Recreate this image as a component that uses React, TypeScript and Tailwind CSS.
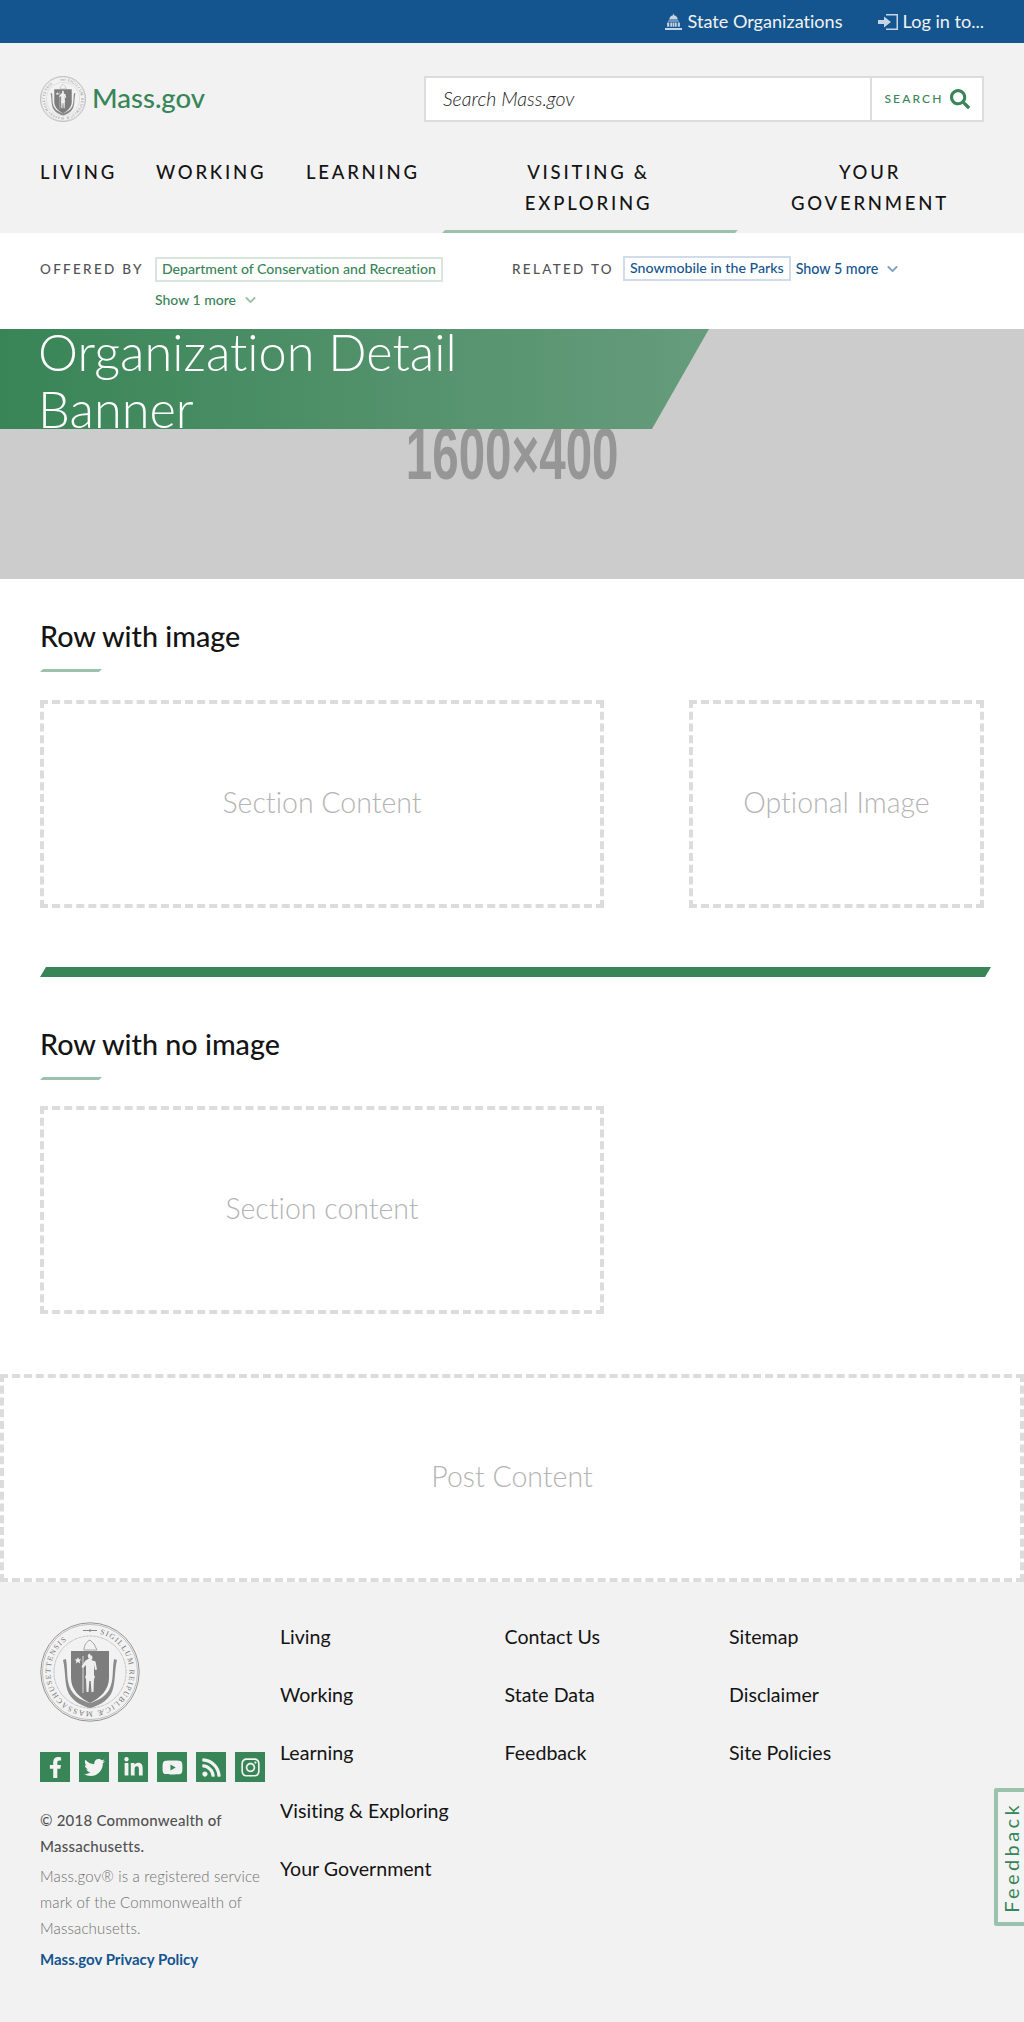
import { FaChevronDown, FaFacebookF, FaInstagram, FaLinkedinIn, FaRss, FaSearch, FaTwitter, FaYoutube } from "react-icons/fa";

const FONT = "font-['Lato','Open_Sans',sans-serif] [font-variant-ligatures:none]";

function Seal({ id, className }: { id: string; className: string }) {
  return (
    <svg viewBox="0 0 100 100" className={className}>
      <circle cx="50" cy="50" r="49.2" fill="#f2f2f2" stroke="#8a8a8a" strokeWidth="0.9" />
      <circle cx="50" cy="50" r="47.6" fill="none" stroke="#8a8a8a" strokeWidth="0.5" />
      <circle cx="50" cy="50" r="36" fill="none" stroke="#9a9a9a" strokeWidth="0.9" strokeDasharray="0.7 0.7" />
      <defs>
        <path id={id} d="M50 10.500 a39.500 39.500 0 1 1 0 79 a39.500 39.500 0 1 1 0 -79" />
      </defs>
      <text fontSize="7.6" fill="#777777" fontFamily="'Liberation Serif', serif" letterSpacing="1.25">
        <textPath href={`#${id}`} startOffset="4%">
          SIGILLUM REIPUBLICÆ MASSACHUSETTENSIS
        </textPath>
      </text>
      <path d="M43 8.500h14M50 7v3" stroke="#888888" strokeWidth="1" />
      <path d="M31 29h38v27c0 12-9 20-19 25c-10-5-19-13-19-25z" fill="#7d7d7d" />
      <path d="M26 37l-3 1c3 12 1 24 6 34c5 8 13 12 21 14c8-2 16-6 21-14c5-10 3-22 6-34l-3-1c-2 12 0 22-5 31c-4 7-12 11-19 13c-7-2-15-6-19-13c-5-9-3-19-5-31z" fill="#8a8a8a" />
      <path d="M50 33c1.500 0 2.500 1 2.500 2.500c0 1-.5 2-1.200 2.500l4.200 1.500l1.500 8l-2 .5l-1-5v10l1 2l-1 2l-.5 13h-2l-.8-11h-1.400l-.8 11h-2l-.5-13l-1-2l1-2v-10l-3 3l-1.500-1.500l4-6l3.500-2c-.7-.5-1.200-1.500-1.200-2.500c0-1.500 1-2.500 2.500-2.500z" fill="#eeeeee" />
      <path d="M43 34v37" stroke="#eeeeee" strokeWidth="0.8" />
      <path d="M38 35l1 2.200 2.400.2-1.800 1.600.6 2.400-2.200-1.300-2.200 1.300.6-2.400-1.800-1.600 2.400-.2z" fill="#eeeeee" />
      <path d="M44 28c0-5 3-9 6-10l4 4 3 6z" fill="none" stroke="#9a9a9a" strokeWidth="0.9" />
    </svg>
  );
}

function NavItem({ lines, className }: { lines: string[]; className?: string }) {
  return (
    <a className={`block shrink-0 text-[18.500px] leading-[30.500px] font-medium tracking-[0.15em] text-[#141414] ${className ?? ""}`}>
      {lines.map((l) => (
        <span key={l} className="block">
          {l}
        </span>
      ))}
    </a>
  );
}

function Placeholder({ label, className }: { label: string; className: string }) {
  return (
    <div className={`flex h-[208px] items-center justify-center border-4 border-dashed border-[#dcdcdc] pb-[3px] text-[28.500px] font-light text-[#b4b4b4] ${className}`}>
      {label}
    </div>
  );
}

function SectionTitle({ children }: { children: string }) {
  return (
    <div>
      <h2 className="text-[28.700px] leading-[36px] font-medium text-[#141414]">{children}</h2>
      <div className="mt-[15px] h-[3px] w-[62px] bg-[#9bc3ab] [clip-path:polygon(3px_0,100%_0,calc(100%-3px)_100%,0_100%)]" />
    </div>
  );
}

const footerCols = [
  ["Living", "Working", "Learning", "Visiting & Exploring", "Your Government"],
  ["Contact Us", "State Data", "Feedback"],
  ["Sitemap", "Disclaimer", "Site Policies"],
];

const socials = [FaFacebookF, FaTwitter, FaLinkedinIn, FaYoutube, FaRss, FaInstagram];

export default function App() {
  return (
    <div className={`relative h-[2022px] overflow-hidden bg-white ${FONT}`}>
      {/* top bar */}
      <div className="flex h-[43px] items-center justify-end bg-[#14558f] pr-10 text-[18.100px] text-[#f2f2f2]">
        <svg viewBox="0 0 16 16" className="mr-[6px] h-[17px] w-[17px] fill-[#c5d5e4]">
          <path d="M8 0l.5 2c2 .3 3.500 2 3.500 4H4c0-2 1.500-3.700 3.500-4z" />
          <path d="M3 7h10v1H3zM2 9h2v4H2zM5 9h2v4H5zM9 9h2v4H9zM12 9h2v4h-2zM7.500 9h1v4h-1zM0 14h16v2H0z" />
        </svg>
        <span>State Organizations</span>
        <svg viewBox="0 0 20 16" className="mr-[5px] ml-[35px] h-[16px] w-[20px] fill-[#c5d5e4]">
          <path d="M0 6h6V2.500L13 8l-7 5.500V10H0z" />
          <path d="M8 0h12v16H8v-1.500h10.500v-13H8z" />
        </svg>
        <span>Log in to...</span>
      </div>

      {/* header */}
      <header className="h-[190px] bg-[#f2f2f2] px-10">
        <div className="flex h-[79px] items-end justify-between">
          <div className="flex items-center gap-[6px]">
            <Seal id="seal-small" className="h-[46px] w-[46px]" />
            <span className="-mt-[2px] text-[27.500px] font-medium text-[#388557]">Mass.gov</span>
          </div>
          <div className="flex h-[46px] w-[560px] border-2 border-[#dcdcdc] bg-white">
            <div className="flex flex-1 items-center pl-[17px] text-[19.500px] font-light text-[#222222] italic">Search Mass.gov</div>
            <div className="flex w-[112px] items-center justify-center gap-[6px] border-l-2 border-[#dcdcdc]">
              <span className="text-[12px] font-medium tracking-[0.18em] text-[#388557]">SEARCH</span>
              <FaSearch className="h-[20px] w-[20px] text-[#388557]" />
            </div>
          </div>
        </div>
        <nav className="mt-[35px] flex">
          <NavItem lines={["LIVING"]} className="w-[116px]" />
          <NavItem lines={["WORKING"]} className="w-[150px]" />
          <NavItem lines={["LEARNING"]} className="w-[136px]" />
          <div className="relative h-[76px] w-[296px] shrink-0">
            <NavItem lines={["VISITING &", "EXPLORING"]} className="-ml-[3px] text-center" />
            <div className="absolute right-0 bottom-0 left-0 h-[3px] bg-[#9bc3ab] [clip-path:polygon(3px_0,100%_0,calc(100%-3px)_100%,0_100%)]" />
          </div>
          <NavItem lines={["YOUR", "GOVERNMENT"]} className="w-[264px] text-center" />
        </nav>
      </header>

      {/* offered by / related to */}
      <div className="flex h-[96px] px-10 pt-[23px]">
        <div className="flex w-[472px] items-start">
          <span className="mt-[3px] w-[115px] text-[13.500px] font-medium tracking-[0.17em] text-[#535353]">OFFERED BY</span>
          <div>
            <span className="inline-block h-[25px] border-2 border-[#d7e7dd] px-[5px] text-[14.100px] leading-[20px] font-medium text-[#388557]">
              Department of Conservation and Recreation
            </span>
            <div className="mt-[7px] flex items-center text-[14px] font-medium text-[#388557]">
              Show 1 more
              <FaChevronDown className="ml-[8px] h-[12px] w-[13px] text-[#9bc3ab]" />
            </div>
          </div>
        </div>
        <div className="flex items-start">
          <span className="mt-[3px] w-[111px] text-[13.500px] font-medium tracking-[0.17em] text-[#535353]">RELATED TO</span>
          <span className="inline-block h-[25px] border-2 border-[#d0dce9] px-[5px] text-[14.200px] leading-[20px] font-medium text-[#14558f]">
            Snowmobile in the Parks
          </span>
          <div className="ml-[5px] flex h-[25px] items-center text-[14.300px] font-medium text-[#14558f]">
            Show 5 more
            <FaChevronDown className="ml-[8px] h-[12px] w-[13px] text-[#7ea3c4]" />
          </div>
        </div>
      </div>

      {/* banner */}
      <div className="relative flex h-[250px] items-center justify-center bg-[#cccccc]">
        <span className="scale-x-[0.66] font-['Liberation_Sans',sans-serif] text-[72px] font-bold text-[#969696]">1600×400</span>
        <div className="absolute top-0 left-0 h-[100px] w-[709px] bg-gradient-to-r from-[#388557] to-[#669c7c] pl-[38px] [clip-path:polygon(0_0,100%_0,652px_100%,0_100%)]">
          <h1 className="-mt-[6px] w-[480px] text-[50.500px] leading-[57px] font-light text-white">Organization Detail Banner</h1>
        </div>
      </div>

      {/* sections */}
      <div className="px-10 pt-[39px]">
        <SectionTitle>Row with image</SectionTitle>
        <div className="mt-[28px] flex justify-between">
          <Placeholder label="Section Content" className="w-[564px]" />
          <Placeholder label="Optional Image" className="w-[295px]" />
        </div>
        <div className="mt-[59px] mr-[-7px] h-[10px] bg-[#388557] [clip-path:polygon(6px_0,100%_0,calc(100%-6px)_100%,0_100%)]" />
        <div className="mt-[49px]">
          <SectionTitle>Row with no image</SectionTitle>
        </div>
        <Placeholder label="Section content" className="mt-[26px] w-[564px]" />
      </div>
      <Placeholder label="Post Content" className="mt-[60px] w-full" />

      {/* footer */}
      <footer className="flex h-[440px] bg-[#f2f2f2] pt-10 pl-10">
        <div className="w-[240px]">
          <Seal id="seal-large" className="h-[100px] w-[100px]" />
          <div className="mt-[30px] flex gap-[9px]">
            {socials.map((Icon, i) => (
              <a key={i} className="flex h-[30px] w-[30px] items-center justify-center bg-[#388557] text-[#f2f2f2]">
                <Icon className="h-[21px] w-[21px]" />
              </a>
            ))}
          </div>
          <p className="mt-[25px] text-[15px] leading-[26px] font-medium tracking-[0.015em] text-[#535353]">© 2018 Commonwealth of Massachusetts.</p>
          <p className="mt-[4px] text-[15px] leading-[26px] font-light tracking-[0.01em] text-[#707070]">Mass.gov® is a registered service mark of the Commonwealth of Massachusetts.</p>
          <p className="mt-[5px] text-[15px] leading-[26px] font-bold text-[#14558f]">Mass.gov Privacy Policy</p>
        </div>
        {footerCols.map((col) => (
          <ul key={col[0]} className="flex w-[224.500px] flex-col gap-[29px]">
            {col.map((t) => (
              <li key={t} className="text-[19.600px] leading-[29px] text-[#141414]">
                {t}
              </li>
            ))}
          </ul>
        ))}
      </footer>

      {/* feedback tab */}
      <div className="absolute top-[1788px] right-0 flex h-[138px] w-[30px] items-center justify-center rounded-l-[3px] border-[4px] border-r-0 border-[#9bc3ab] bg-[#f4f4f4]">
        <span className="rotate-180 text-[20px] leading-[24px] tracking-[0.17em] text-[#388557] [writing-mode:vertical-rl]">Feedback</span>
      </div>
    </div>
  );
}
